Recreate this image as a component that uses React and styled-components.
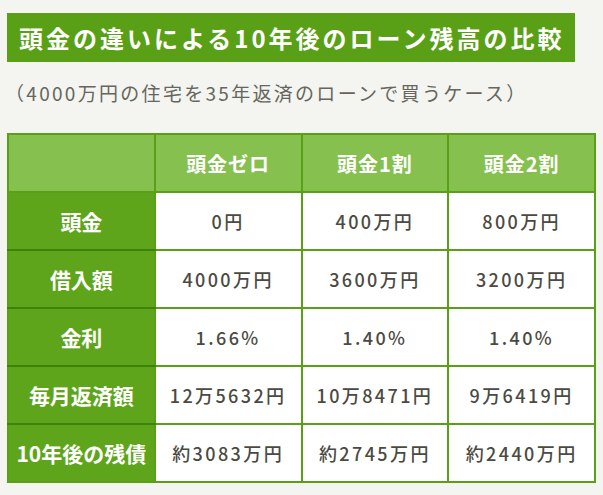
import React from "react";
import styled, { createGlobalStyle } from "styled-components";

const Global = createGlobalStyle`
  html, body { margin: 0; padding: 0; background: #f4f5f0; }
  body { font-family: "Noto Sans CJK JP", "Noto Sans", sans-serif; }
`;

const Page = styled.div`
  width: 603px;
  height: 495px;
  box-sizing: border-box;
  padding: 13px 7px 0 7px;
  background: #f4f5f0;
  overflow: hidden;
`;

const Title = styled.h2`
  display: inline-block;
  margin: 0;
  height: 49px;
  line-height: 49px;
  padding: 0 11px 0 12px;
  background: #5aa016;
  color: #ffffff;
  font-size: 24px;
  font-weight: 700;
  letter-spacing: 3px;
  white-space: nowrap;
`;

const Subtitle = styled.p`
  margin: 18px 0 0 -2px;
  height: 26px;
  line-height: 26px;
  color: #66665e;
  font-size: 19px;
  font-weight: 400;
  letter-spacing: 2.3px;
  white-space: nowrap;
`;

const Table = styled.table`
  margin-top: 27px;
  width: 589px;
  border-collapse: collapse;
  table-layout: fixed;
  border: 2px solid #5aa016;
`;

const HeadCell = styled.th`
  height: 56px;
  padding: 0;
  background: #86c04f;
  border: 2px solid #5aa016;
  color: #ffffff;
  font-size: 20px;
  font-weight: 700;
  letter-spacing: 1px;
  text-align: center;
`;

const RowLabel = styled.th`
  height: 56px;
  padding: 0;
  background: #5fa51c;
  border: 2px solid #5aa016;
  border-bottom-color: ${(p) => (p.$last ? "#5aa016" : "#3f8208")};
  color: #ffffff;
  font-size: 21px;
  font-weight: 700;
  text-align: center;
  white-space: nowrap;
`;

const Cell = styled.td`
  height: 56px;
  padding: 0;
  background: #ffffff;
  border: 2px solid #5aa016;
  color: #4b4a42;
  font-size: 18px;
  font-weight: 500;
  letter-spacing: 2.4px;
  text-align: center;
  white-space: nowrap;
`;

const columns = ["頭金ゼロ", "頭金1割", "頭金2割"];

const rows = [
  { label: "頭金", values: ["0円", "400万円", "800万円"] },
  { label: "借入額", values: ["4000万円", "3600万円", "3200万円"] },
  { label: "金利", values: ["1.66%", "1.40%", "1.40%"] },
  { label: "毎月返済額", values: ["12万5632円", "10万8471円", "9万6419円"] },
  { label: "10年後の残債", values: ["約3083万円", "約2745万円", "約2440万円"] },
];

export default function App() {
  return (
    <>
      <Global />
      <Page>
        <Title>頭金の違いによる10年後のローン残高の比較</Title>
        <Subtitle>（4000万円の住宅を35年返済のローンで買うケース）</Subtitle>
        <Table>
          <thead>
            <tr>
              <HeadCell />
              {columns.map((c) => (
                <HeadCell key={c}>{c}</HeadCell>
              ))}
            </tr>
          </thead>
          <tbody>
            {rows.map((r, i) => (
              <tr key={r.label}>
                <RowLabel $last={i === rows.length - 1}>{r.label}</RowLabel>
                {r.values.map((v, j) => (
                  <Cell key={j}>{v}</Cell>
                ))}
              </tr>
            ))}
          </tbody>
        </Table>
      </Page>
    </>
  );
}
